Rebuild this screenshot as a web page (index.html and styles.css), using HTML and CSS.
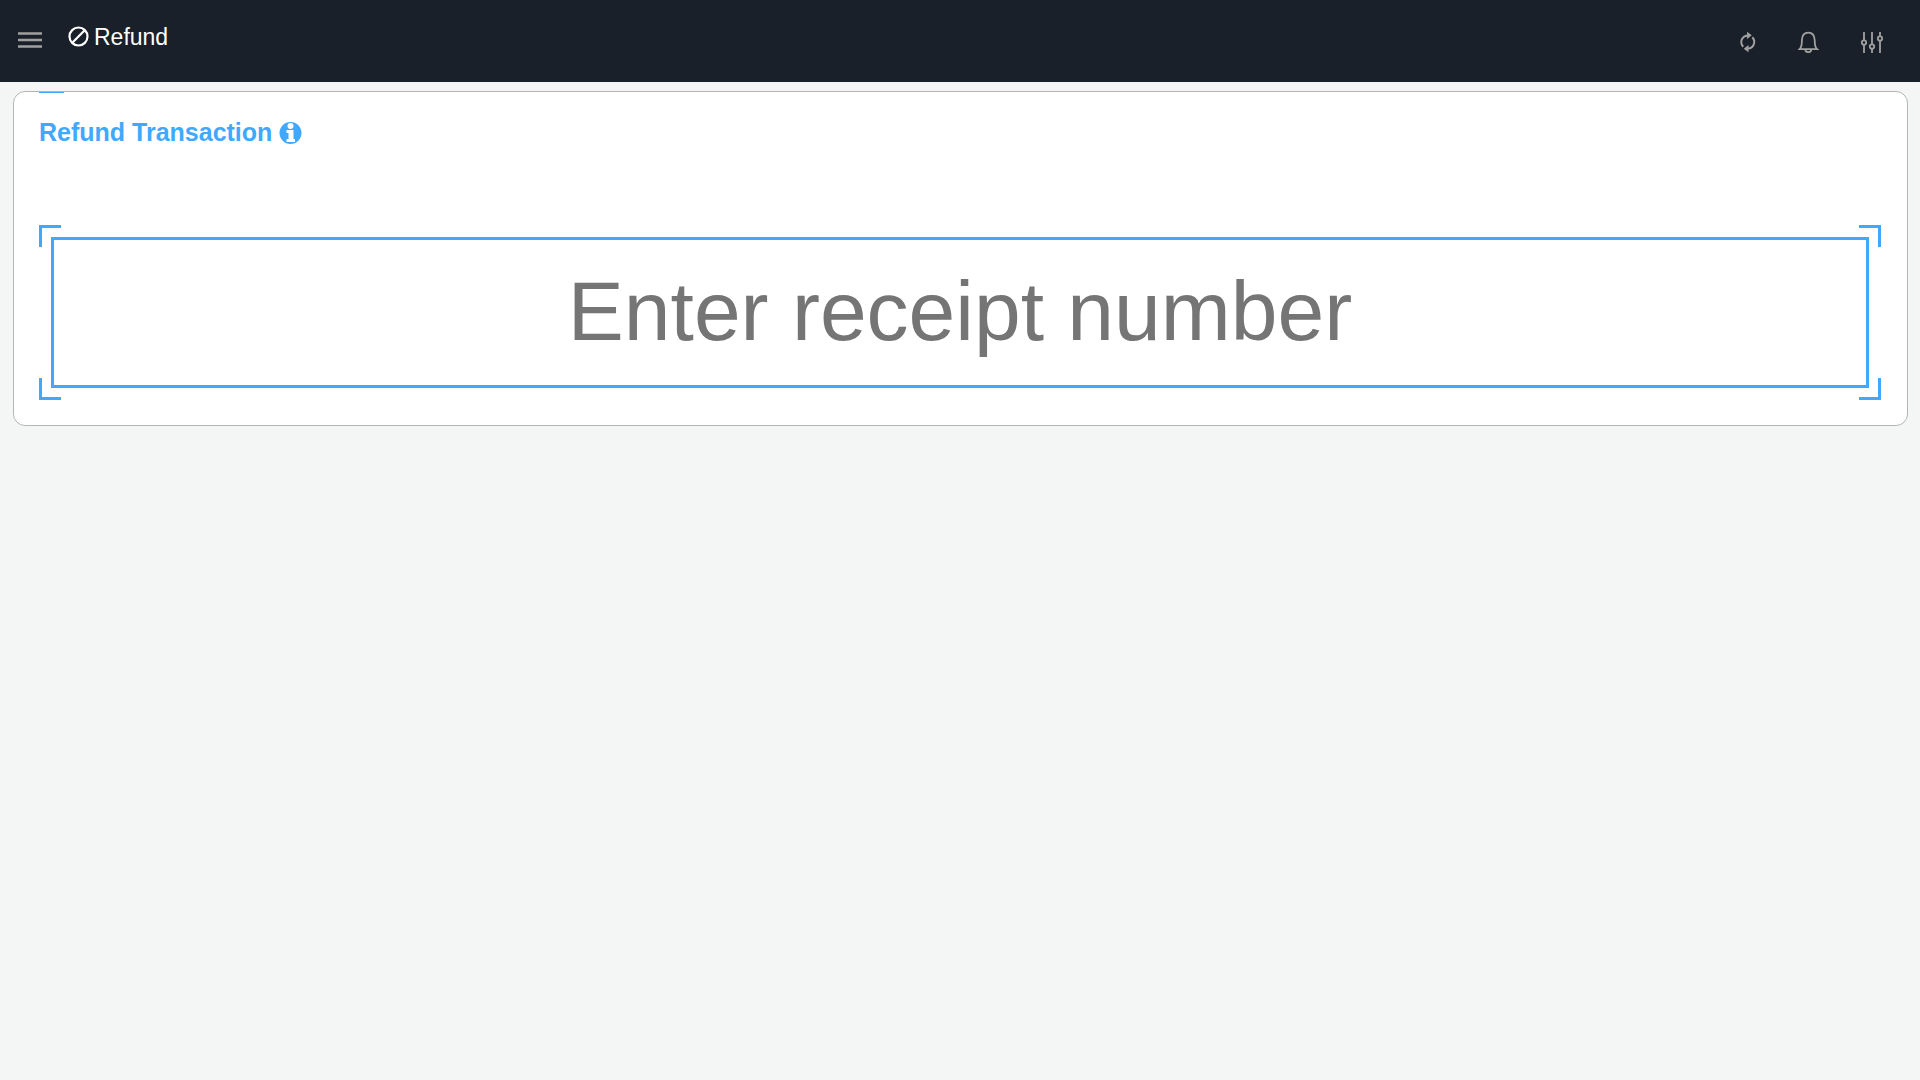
FILE: index.html
```
<!DOCTYPE html>
<html lang="en">
    <head>
        <meta charset="utf-8">
        <meta name="viewport" content="width=device-width, initial-scale=1.0">
        <title>Refund</title>
        <link rel="stylesheet" href="styles.css">
    </head>
    <body>

        <header class="topbar">
            <button type="button" class="iconbtn" aria-label="Menu">
                <svg viewBox="0 0 24 24"><path d="M0 4.500h24M0 11h24M0 17.500h24" stroke-width="2.500"/></svg>
            </button>
            <h1 class="pagetitle">
                <svg viewBox="0 0 22 22" aria-hidden="true"><circle cx="11.500" cy="10.500" r="9"/><path d="M5.300 16.700L17.700 4.300"/></svg>
                Refund
            </h1>
            <nav class="actions">
                <button type="button" class="iconbtn" aria-label="Refresh">
                    <svg viewBox="0 0 24 24">
                        <path d="M7.200 17.700C3.200 13.500 5.800 7 11.500 6.400M16.300 8.300c4 4.200 1.400 10.700-4.300 11.300" stroke-width="2"/>
                        <path class="solid" d="M11 2.800l4.800 3.500-4.800 3.700zM12.500 16l-4.800 3.700 4.800 3.500z"/>
                    </svg>
                </button>
                <button type="button" class="iconbtn" aria-label="Notifications">
                    <svg viewBox="0 0 24 24">
                        <path d="M1.500 20.200c2.700-2.500 2.200-5 2.400-9.200C4.100 6.500 6.500 3.600 10.300 3.600S16.500 6.500 16.700 11c.2 4.200-.3 6.700 2.400 9.200z"/>
                        <path d="M7.300 20.500c.2 3.500 5.800 3.500 6 0"/>
                    </svg>
                </button>
                <button type="button" class="iconbtn" aria-label="Settings">
                    <svg viewBox="0 0 24 24">
                        <path d="M4 3v8M4 16v8M12 3v12M12 20v4M20 3v4M20 12v12"/>
                        <circle cx="4" cy="13.500" r="2.200"/><circle cx="12" cy="17.500" r="2.200"/><circle cx="20" cy="9.500" r="2.200"/>
                    </svg>
                </button>
            </nav>
        </header>

        <main class="card">
            <div class="tabline"></div>
            <h2 class="cardtitle">
                <label for="receipt">Refund Transaction</label>
                <svg viewBox="0 0 23 23" aria-hidden="true">
                    <circle class="disc" cx="11.500" cy="12" r="11"/>
                    <circle class="cut" cx="11.500" cy="5" r="3"/>
                    <path class="cut" d="M7.500 9h7v9h1.500v3h-8.500v-3h2v-6h-2z"/>
                </svg>
            </h2>
            <div class="scanframe">
                <span class="corner topleft"></span>
                <span class="corner topright"></span>
                <span class="corner bottomleft"></span>
                <span class="corner bottomright"></span>
                <input type="text" id="receipt" class="receipt" placeholder="Enter receipt number">
            </div>
        </main>

    </body>
</html>
```
FILE: styles.css
```
*
{
    box-sizing: border-box;
}

body
{
    margin: 0;
    background-color: #f4f6f5;
    font-family: "Liberation Sans", Arial, sans-serif;
}

/* Top bar */
.topbar
{
    display: flex;
    align-items: center;
    height: 82px;
    padding: 0 36px 0 18px;
    background-color: #1a2029;
}

.iconbtn
{
    display: flex;
    padding: 0;
    border: 0;
    background: none;
    color: #a0a0a0;
    cursor: pointer;
}

.iconbtn svg
{
    width: 24px;
    height: 24px;
    fill: none;
    stroke: currentColor;
    stroke-width: 1.8;
}

.iconbtn .solid
{
    fill: currentColor;
    stroke: none;
}

.pagetitle
{
    display: flex;
    align-items: center;
    gap: 5px;
    margin: 0 0 0 25px;
    padding-bottom: 9px;
    color: #ffffff;
    font-size: 23px;
    font-weight: normal;
    line-height: 28px;
}

.pagetitle svg
{
    width: 22px;
    height: 22px;
    fill: none;
    stroke: currentColor;
    stroke-width: 2.2;
}

.actions
{
    display: flex;
    gap: 38px;
    margin-left: auto;
}

/* Receipt card */
.card
{
    margin: 9px 12px 9px 13px;
    padding: 0 26px 25px 25px;
    border: 1px solid #b5b5b5;
    border-radius: 12px;
    background-color: #ffffff;
}

.tabline
{
    width: 25px;
    height: 1px;
    background-color: #40a9ff;
}

.cardtitle
{
    display: flex;
    align-items: center;
    gap: 7px;
    margin: 24px 0 78px;
    color: #40a9ff;
    font-size: 25px;
    line-height: 30px;
}

.cardtitle svg
{
    width: 23px;
    height: 23px;
}

.disc
{
    fill: #40a9ff;
}

.cut
{
    fill: #ffffff;
}

.scanframe
{
    position: relative;
    padding: 12px;
}

.corner
{
    position: absolute;
    width: 22px;
    height: 22px;
    border: 0 solid #40a9ff;
}

.topleft
{
    top: 0;
    left: 0;
    border-width: 3px 0 0 3px;
}

.topright
{
    top: 0;
    right: 0;
    border-width: 3px 3px 0 0;
}

.bottomleft
{
    bottom: 0;
    left: 0;
    border-width: 0 0 3px 3px;
}

.bottomright
{
    bottom: 0;
    right: 0;
    border-width: 0 3px 3px 0;
}

.receipt
{
    display: block;
    width: 100%;
    height: 151px;
    padding: 0 12px 2px;
    border: 3px solid #40a9ff;
    outline: none;
    background-color: #ffffff;
    color: #333333;
    font-family: inherit;
    font-size: 84px;
    text-align: center;
}

.receipt::placeholder
{
    color: #757575;
}
```
